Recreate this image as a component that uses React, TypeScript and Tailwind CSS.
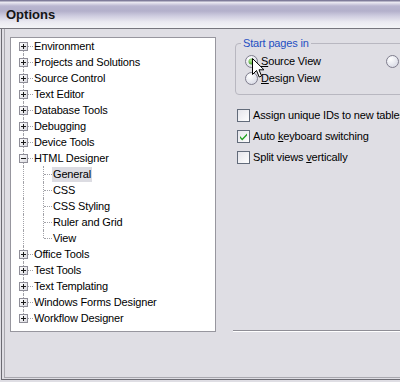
import React from "react";

type Root = { label: string; children?: string[] };

const roots: Root[] = [
  { label: "Environment" },
  { label: "Projects and Solutions" },
  { label: "Source Control" },
  { label: "Text Editor" },
  { label: "Database Tools" },
  { label: "Debugging" },
  { label: "Device Tools" },
  { label: "HTML Designer", children: ["General", "CSS", "CSS Styling", "Ruler and Grid", "View"] },
  { label: "Office Tools" },
  { label: "Test Tools" },
  { label: "Text Templating" },
  { label: "Windows Forms Designer" },
  { label: "Workflow Designer" },
];

function Expander({ open }: { open: boolean }) {
  return (
    <svg width="9" height="9" viewBox="0 0 9 9" className="absolute left-[8px] top-[4px]">
      <defs>
        <linearGradient id="exg" x1="0" y1="0" x2="1" y2="1">
          <stop offset="0" stopColor="#ffffff" />
          <stop offset="1" stopColor="#d8d8de" />
        </linearGradient>
      </defs>
      <rect x="0.5" y="0.5" width="8" height="8" fill="url(#exg)" stroke="#8f8e98" />
      <line x1="2" y1="4.5" x2="7" y2="4.5" stroke="#1a1a1a" />
      {!open && <line x1="4.5" y1="2" x2="4.5" y2="7" stroke="#1a1a1a" />}
    </svg>
  );
}

function RootRow({ label, first, last, open, hasChildren }: { label: string; first: boolean; last: boolean; open: boolean; hasChildren: boolean }) {
  return (
    <div className="flex h-[16px] items-center">
      <div className="relative h-full w-[22px] shrink-0">
        <div
          className={
            "absolute left-[12px] border-l border-dotted border-[#a2a2a8] " +
            (first ? "top-[8px] bottom-0" : last ? "top-0 h-[8px]" : "top-0 bottom-0")
          }
        />
        <div className="absolute left-[17px] top-[8px] w-[5px] border-t border-dotted border-[#a2a2a8]" />
        <Expander open={open && hasChildren} />
      </div>
      <span className="px-[1px] leading-[14px]">{label}</span>
    </div>
  );
}

function ChildRow({ label, last, selected }: { label: string; last: boolean; selected: boolean }) {
  return (
    <div className="flex h-[16px] items-center">
      <div className="relative h-full w-[41px] shrink-0">
        <div className="absolute left-[12px] top-0 bottom-0 border-l border-dotted border-[#a2a2a8]" />
        <div
          className={
            "absolute left-[32px] border-l border-dotted border-[#a2a2a8] " +
            (last ? "top-0 h-[8px]" : "top-0 bottom-0")
          }
        />
        <div className="absolute left-[33px] top-[8px] w-[8px] border-t border-dotted border-[#a2a2a8]" />
      </div>
      <span className={"px-[1px] leading-[15px] " + (selected ? "bg-[#dcdce2]" : "")}>{label}</span>
    </div>
  );
}

function Radio({ checked }: { checked?: boolean }) {
  return (
    <svg width="13" height="13" viewBox="0 0 13 13" className="shrink-0">
      <defs>
        <radialGradient id={checked ? "rgc" : "rgu"} cx="0.35" cy="0.3" r="0.8">
          <stop offset="0" stopColor="#ffffff" />
          <stop offset="1" stopColor="#d6d8e4" />
        </radialGradient>
        <radialGradient id="dotg" cx="0.4" cy="0.35" r="0.7">
          <stop offset="0" stopColor="#b8ee9a" />
          <stop offset="1" stopColor="#3c9a22" />
        </radialGradient>
      </defs>
      <circle cx="6.5" cy="6.5" r="6" fill={checked ? "url(#rgc)" : "url(#rgu)"} stroke="#7e7c8c" />
      {checked && <circle cx="6.5" cy="6.5" r="3" fill="url(#dotg)" />}
    </svg>
  );
}

function Checkbox({ checked }: { checked?: boolean }) {
  return (
    <svg width="13" height="13" viewBox="0 0 13 13" className="shrink-0">
      <defs>
        <linearGradient id="cbg" x1="0" y1="0" x2="1" y2="1">
          <stop offset="0" stopColor="#e4e4ea" />
          <stop offset="1" stopColor="#ffffff" />
        </linearGradient>
      </defs>
      <rect x="0.5" y="0.5" width="12" height="12" fill="url(#cbg)" stroke="#626b7a" />
      {checked && (
        <path d="M3 6 L5.2 8.4 L10 3.6 L10 5.6 L5.2 10.4 L3 8 Z" fill="#21a121" />
      )}
    </svg>
  );
}

export default function App() {
  const rows: React.ReactNode[] = [];
  roots.forEach((r, i) => {
    rows.push(
      <RootRow
        key={r.label}
        label={r.label}
        first={i === 0}
        last={i === roots.length - 1}
        open={!!r.children}
        hasChildren={!!r.children}
      />
    );
    if (r.children) {
      r.children.forEach((c, j) => {
        rows.push(
          <ChildRow key={c} label={c} last={j === r.children!.length - 1} selected={c === "General"} />
        );
      });
    }
  });

  return (
    <div
      className="relative h-[382px] w-[400px] overflow-hidden bg-[#dfdee4] text-[11px] tracking-[-0.15px] text-black"
      style={{ fontFamily: '"Liberation Sans", Arial, sans-serif' }}
    >
      {/* Title bar */}
      <div className="flex h-[29px] items-center border-b border-[#77767e] bg-[linear-gradient(to_bottom,#7f7c9a_0px,#7f7c9a_1px,#efeef5_2px,#b9b6d0_6px,#b3b0cb_11px,#cfcde0_16px,#ebeaf1_22px,#f4f4f7_28px)] pl-[6px] pt-[2px]">
        <span className="text-[13px] font-bold tracking-normal text-[#151515]">Options</span>
      </div>

      {/* Frame */}
      <div className="ml-[1px] h-[351px] border-b border-l border-[#6c6b73] pb-[1px] pl-[2px]">
        <div className="flex h-full border-b border-l border-[#a9a8af]">
          {/* Tree */}
          <div className="ml-[5px] mt-[8px] h-[295px] w-[206px] shrink-0 border border-[#97969e] bg-white">
            {rows}
          </div>

          {/* Right panel */}
          <div className="flex min-w-0 flex-1 flex-col">
            <div className="relative ml-[19px] mt-[14px] h-[52px] w-[220px] rounded-[4px] border border-[#b8b7c0] pl-[9px] pt-[9px]">
              <span className="absolute left-[5px] top-[-8px] bg-[#dfdee4] px-[2px] leading-[14px] text-[#1e4fc2]">
                Start pages in
              </span>
              <div className="flex h-[17px] items-center">
                <Radio checked />
                <span className="ml-[3px] w-[125px] shrink-0">
                  <u>S</u>ource View
                </span>
                <Radio />
              </div>
              <div className="flex h-[17px] items-center">
                <Radio />
                <span className="ml-[3px]">
                  <u>D</u>esign View
                </span>
              </div>
            </div>

            <div className="ml-[21px] mt-[10px] flex flex-col">
              <div className="flex h-[21px] items-center whitespace-nowrap">
                <Checkbox />
                <span className="ml-[3px]">Assign unique IDs to new tables</span>
              </div>
              <div className="flex h-[21px] items-center whitespace-nowrap">
                <Checkbox checked />
                <span className="ml-[3px]">
                  Auto <u>k</u>eyboard switching
                </span>
              </div>
              <div className="flex h-[21px] items-center whitespace-nowrap">
                <Checkbox />
                <span className="ml-[3px]">
                  Split views <u>v</u>ertically
                </span>
              </div>
            </div>

            <div className="ml-[17px] mt-[162px] h-[2px] border-b border-t border-b-white border-t-[#8f8e96]" />
          </div>
        </div>
      </div>

      {/* Mouse cursor */}
      <svg width="13" height="21" viewBox="0 0 13 21" className="absolute left-[252px] top-[58px]">
        <path d="M0.5 0.5 L0.5 16.5 L4.5 12.5 L7.2 19 L9.6 18 L7 11.8 L12 11.8 Z" fill="#ffffff" stroke="#000000" strokeLinejoin="miter" />
      </svg>
    </div>
  );
}
